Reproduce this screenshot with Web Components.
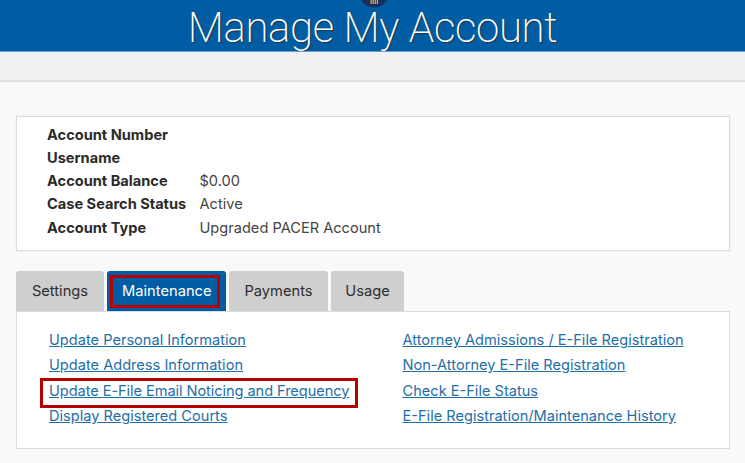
<!DOCTYPE html>
<html><head><meta charset="utf-8"><style>
html,body{margin:0;padding:0;height:463px;overflow:hidden;background:#f9f9f9;font-family:Inter,"Liberation Sans",sans-serif;color:#333}
</style></head><body>
<template id="hdr"><style>
:host{display:block;position:relative;height:51px;background:#005ca3;border-bottom:1px solid #6a9fd0;overflow:hidden;text-align:center}
svg{position:absolute;left:359px;top:-22px}
h1{margin:0;padding-top:4px;color:#fff;font:200 42px/48px Roboto,sans-serif;letter-spacing:-.37px;text-shadow:1px 1px 1px rgba(60,30,10,.6)}
</style><svg width="30" height="30" viewBox="0 0 30 30"><circle cx="15" cy="14.5" r="15" fill="#1c2e5c"/><path d="M11.5 22h1.2v4h-1.2zM13.6 22h1.2v4h-1.2zM15.7 22h1.2v4h-1.2zM17.8 22h1.2v4h-1.2z" fill="#e8b33c"/></svg><h1><slot></slot></h1></template>
<template id="sub"><style>:host{display:block;height:28px;background:#f0f1f3;border-bottom:2px solid #e2e2e2}</style></template>
<template id="card"><style>
:host{display:block;margin:34px 15px 0 16px;background:#fff;border:1px solid #dcdcdc;box-shadow:0 0 2px #e8e8e8;padding:6.6px 0 0 30px;height:126.4px}
.g{display:grid;grid-template-columns:152.5px 1fr;grid-auto-rows:23.25px;font-size:14.6px;line-height:23.25px;color:#444}
::slotted(b){color:#2b2b2b;font-weight:700}
</style><div class="g"><slot></slot></div></template>
<template id="tabs"><style>
:host{display:flex;gap:3px;margin:20px 0 0 16px;height:40px;align-items:stretch}
</style><slot></slot></template>
<template id="tab"><style>
:host{display:flex;align-items:center;justify-content:center;box-sizing:border-box;background:#cfcfcf;border-radius:3px 3px 0 0;font-size:14.7px;color:#2e2e2e}
:host([active]){background:#005ca3;color:#fff;padding:4px 7px 3px 3px;justify-content:flex-start}
:host([active]) span{display:flex;align-items:center;height:100%;box-sizing:border-box;padding:0 5px 0 9px;border:3px solid #b80000}
</style><span><slot></slot></span></template>
<template id="panel"><style>
:host{display:grid;grid-template-columns:353.5px 1fr;box-sizing:border-box;margin:0 15px 0 16px;height:138px;background:#fff;border:1px solid #dcdcdc;padding:16px 0 0 32px}
.c{display:grid;grid-auto-rows:25.3px;justify-items:start;align-content:start}
</style><div class="c"><slot name="l"></slot></div><div class="c"><slot name="r"></slot></div></template>
<template id="lnk"><style>
:host{display:block;font-size:14.6px;line-height:25.3px;color:#1f6ea8;text-decoration:underline;position:relative;white-space:nowrap}
:host([boxed]){letter-spacing:-.07px}
:host([boxed])::after{content:"";position:absolute;left:-9px;right:-9px;top:-1px;height:30px;box-sizing:border-box;border:3px solid #b80000}
</style><slot></slot></template>
<script>
function def(n,t){customElements.define(n,class extends HTMLElement{constructor(){super();this.attachShadow({mode:"open"}).appendChild(document.getElementById(t).content.cloneNode(true))}})}
def("app-header","hdr");def("sub-bar","sub");def("acct-card","card");def("tab-bar","tabs");def("tab-item","tab");def("link-panel","panel");def("panel-link","lnk");
</script>
<app-header>Manage My Account</app-header>
<sub-bar></sub-bar>
<acct-card><b>Account Number</b><span></span><b>Username</b><span></span><b>Account Balance</b><span>$0.00</span><b>Case Search Status</b><span>Active</span><b>Account Type</b><span>Upgraded PACER Account</span></acct-card>
<tab-bar><tab-item style="width:88px">Settings</tab-item><tab-item active style="width:119px">Maintenance</tab-item><tab-item style="width:99px">Payments</tab-item><tab-item style="width:73px">Usage</tab-item></tab-bar>
<link-panel>
<panel-link slot="l">Update Personal Information</panel-link>
<panel-link slot="l">Update Address Information</panel-link>
<panel-link slot="l" boxed>Update E-File Email Noticing and Frequency</panel-link>
<panel-link slot="l">Display Registered Courts</panel-link>
<panel-link slot="r">Attorney Admissions / E-File Registration</panel-link>
<panel-link slot="r">Non-Attorney E-File Registration</panel-link>
<panel-link slot="r">Check E-File Status</panel-link>
<panel-link slot="r">E-File Registration/Maintenance History</panel-link>
</link-panel>
</body></html>
